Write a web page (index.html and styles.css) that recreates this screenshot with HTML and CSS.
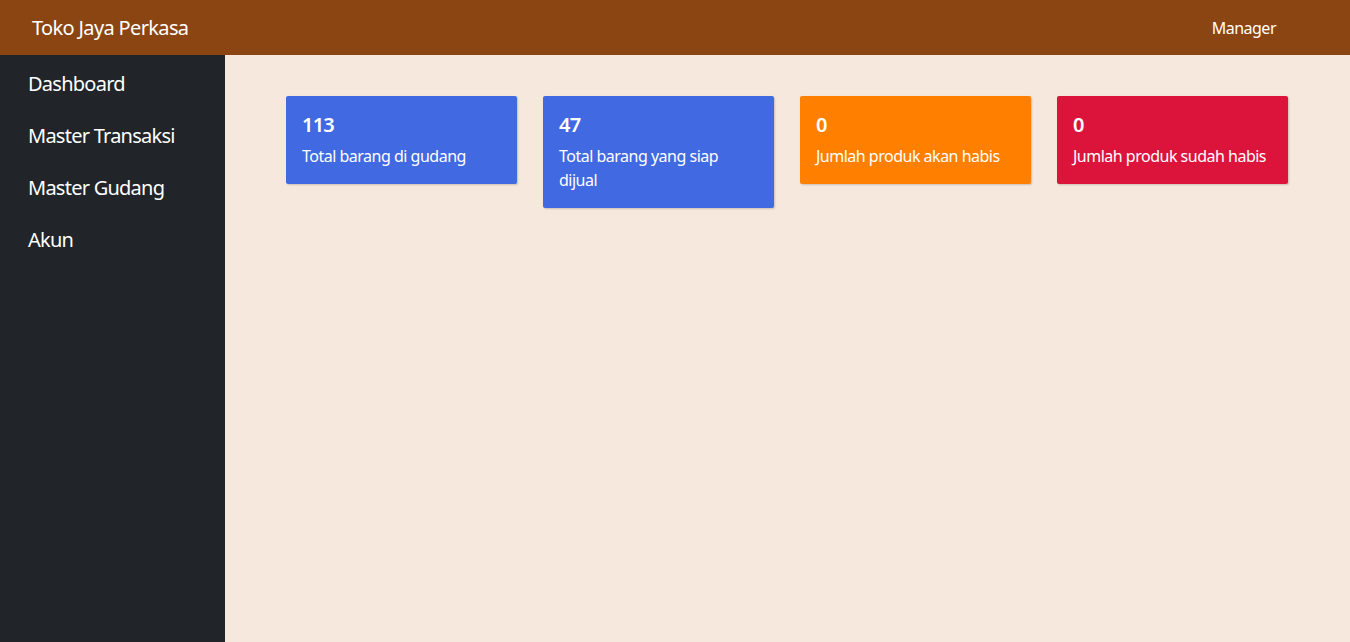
FILE: index.html
```html
<!DOCTYPE html>
<html lang="id">
<head>
<meta charset="utf-8">
<title>Toko Jaya Perkasa</title>
<link rel="stylesheet" href="styles.css">
</head>
<body>
<header class="topbar">
  <div class="brand">Toko Jaya Perkasa</div>
  <div class="user">Manager</div>
</header>
<div class="layout">
  <nav class="sidebar">
    <a class="nav-link" href="#">Dashboard</a>
    <a class="nav-link" href="#">Master Transaksi</a>
    <a class="nav-link" href="#">Master Gudang</a>
    <a class="nav-link" href="#">Akun</a>
  </nav>
  <main class="content">
    <div class="cards">
      <div class="card card-blue">
        <h5 class="card-num">113</h5>
        <p class="card-text">Total barang di gudang</p>
      </div>
      <div class="card card-blue">
        <h5 class="card-num">47</h5>
        <p class="card-text">Total barang yang siap dijual</p>
      </div>
      <div class="card card-orange">
        <h5 class="card-num">0</h5>
        <p class="card-text">Jumlah produk akan habis</p>
      </div>
      <div class="card card-red">
        <h5 class="card-num">0</h5>
        <p class="card-text">Jumlah produk sudah habis</p>
      </div>
    </div>
  </main>
</div>
</body>
</html>
```
FILE: styles.css
```css
* { box-sizing: border-box; }
html, body { height: 100%; }
body {
  margin: 0;
  font-family: "Noto Sans", "Open Sans", sans-serif;
  font-size: 16px;
  line-height: 1.5;
  letter-spacing: -0.5px;
  color: #212529;
  display: flex;
  flex-direction: column;
  background: #f6e8dc;
}
.topbar {
  height: 55px;
  flex: 0 0 55px;
  background: #8b4513;
  color: #fff;
  display: flex;
  align-items: center;
  justify-content: space-between;
  padding: 0 74px 0 32px;
}
.brand { font-size: 20px; letter-spacing: -0.65px; }
.user { font-size: 16px; }
.layout {
  flex: 1;
  display: flex;
}
.sidebar {
  width: 225px;
  flex: 0 0 225px;
  background: #212529;
  display: flex;
  flex-direction: column;
  padding-top: 3px;
}
.nav-link {
  color: #fff;
  text-decoration: none;
  font-size: 20px;
  letter-spacing: -0.75px;
  line-height: 30px;
  padding: 11px 28px;
}
.content {
  flex: 1;
  padding: 41px 62px 0 61px;
}
.cards {
  display: grid;
  grid-template-columns: repeat(4, 231px);
  gap: 26px;
  align-items: start;
}
.card {
  padding: 16px;
  color: #fff;
  border-radius: 2px;
  box-shadow: 1px 1px 2px rgba(0,0,0,0.18);
}
.card-num {
  margin: 0 0 7px;
  padding-top: 1px;
  font-size: 20px;
  font-weight: 600;
  letter-spacing: -0.8px;
  line-height: 24px;
}
.card-text {
  margin: 0;
  font-size: 16px;
  line-height: 24px;
}
.card-blue { background: #4169e1; }
.card-orange { background: #ff8000; }
.card-red { background: #dc143c; }
```
